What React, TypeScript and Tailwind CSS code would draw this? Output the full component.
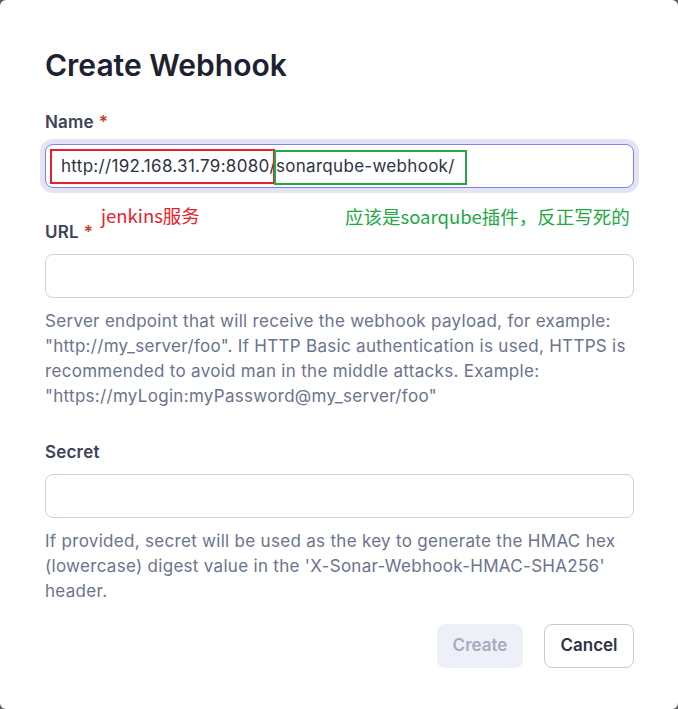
import React from "react";

const Field = ({
  label,
  required,
  help,
  children,
}: {
  label: string;
  required?: boolean;
  help?: React.ReactNode;
  children?: React.ReactNode;
}) => (
  <div className="flex flex-col">
    <label className="text-[17px] font-semibold text-[#3e4357] leading-6 tracking-[0.2px]">
      {label}
      {required && <span className="text-[#c8412e] ml-[5px]">*</span>}
    </label>
    {children}
    {help && (
      <p className="mt-[11px] text-[17px] leading-[25px] tracking-[0.3px] text-[#6b738e]">{help}</p>
    )}
  </div>
);

export default function App() {
  return (
    <div className="w-[678px] h-[709px] bg-[#5a5a5a] font-['Inter',sans-serif]">
      <div className="w-full h-full bg-white rounded-[6px] pl-[45px] pr-[44px] pt-[47px] flex flex-col">
        <h1 className="text-[30px] font-semibold text-[#1e2130] leading-9">
          Create Webhook
        </h1>

        <div className="mt-[27px]">
          <Field label="Name" required>
            <div className="relative mt-[10px] h-[44px] rounded-[8px] border border-[#7f84df] ring-[5px] ring-[#e3e5f7] bg-white flex items-center pl-[15px] pt-[2px] text-[17px] tracking-[0.3px] text-[#2e3244]">
              <span>http://192.168.31.79:8080/</span>
              <span>sonarqube-webhook/</span>
              <div className="absolute left-[4px] top-[4px] w-[225px] h-[35px] border-2 border-[#e8202a]" />
              <div className="absolute left-[228px] top-[5px] w-[193px] h-[35px] border-2 border-[#22a845]" />
            </div>
          </Field>
        </div>

        <div className="relative mt-[10px]">
          <div className="absolute left-[56px] top-[4px] text-[18.5px] text-[#e8202a] font-['Noto_Sans_CJK_SC',sans-serif]">
            jenkins服务
          </div>
          <div className="absolute left-[300px] top-[5px] text-[18.5px] text-[#22a845] font-['Noto_Sans_CJK_SC',sans-serif]">
            应该是soarqube插件，反正写死的
          </div>
          <div className="pt-[22px]">
            <Field
              label="URL"
              required
              help={
                <>
                  Server endpoint that will receive the webhook payload, for example:
                  "http://my_server/foo". If HTTP Basic authentication is used, HTTPS is
                  recommended to avoid man in the middle attacks. Example:
                  "https://myLogin:myPassword@my_server/foo"
                </>
              }
            >
              <div className="mt-[10px] h-[44px] rounded-[8px] border border-[#cdd1e0] bg-white" />
            </Field>
          </div>
        </div>

        <div className="mt-[31px]">
          <Field
            label="Secret"
            help={
              <>
                If provided, secret will be used as the key to generate the HMAC hex
                (lowercase) digest value in the 'X-Sonar-Webhook-HMAC-SHA256'
                header.
              </>
            }
          >
            <div className="mt-[10px] h-[44px] rounded-[8px] border border-[#cdd1e0] bg-white" />
          </Field>
        </div>

        <div className="mt-[20px] flex justify-end gap-[21px]">
          <button className="h-[44px] w-[86px] rounded-[8px] bg-[#eef0f8] text-[#a6abc2] text-[17px] font-semibold">
            Create
          </button>
          <button className="h-[44px] w-[90px] rounded-[8px] border border-[#c6cbdc] bg-white text-[#2e3244] text-[17px] font-semibold">
            Cancel
          </button>
        </div>
      </div>
    </div>
  );
}
